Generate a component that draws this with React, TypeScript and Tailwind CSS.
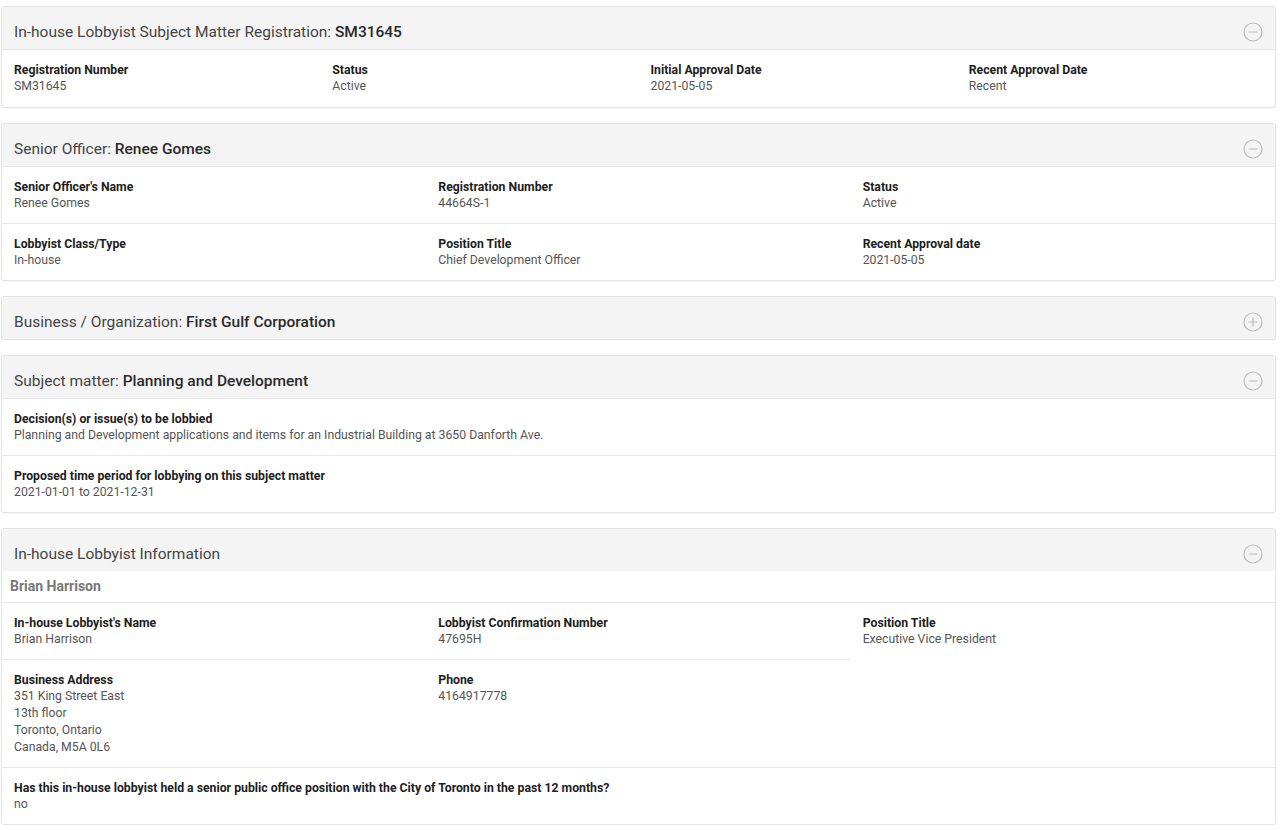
import type { ReactNode } from 'react'

type Field = { label: string; value: ReactNode }

function ToggleIcon({ open }: { open: boolean }) {
  return (
    <svg width="20" height="20" viewBox="0 0 20 20" fill="none" stroke="#bdbdbd" strokeWidth="1.2">
      <circle cx="10" cy="10" r="9" />
      <path d="M5.5 10h9" />
      {!open && <path d="M10 5.5v9" />}
    </svg>
  )
}

function PanelHeader({ title, strong, open, divided }: { title: string; strong?: string; open: boolean; divided: boolean }) {
  return (
    <header
      className={`flex h-[42px] items-start justify-between bg-[#f4f4f4] pl-[12px] pr-[12px] pt-[16px] ${
        divided ? 'h-[43px] border-b border-[#e6e6e6]' : ''
      }`}
    >
      <h2 className="text-[15.5px] leading-[19px] text-[#444]">
        {title}
        {strong && <span className="font-medium text-[#2a2a2a]">{strong}</span>}
      </h2>
      <span className="-mt-[1px]">
        <ToggleIcon open={open} />
      </span>
    </header>
  )
}

function Panel({
  title,
  strong,
  open = true,
  children,
}: {
  title: string
  strong?: string
  open?: boolean
  children?: ReactNode
}) {
  return (
    <section className="overflow-hidden rounded-[3px] border border-[#e3e3e3] bg-white shadow-[0_1px_1px_rgba(0,0,0,0.03)]">
      <PanelHeader title={title} strong={strong} open={open} divided={open && !!children} />
      {open && children}
    </section>
  )
}

function Cell({ label, value, className = '' }: Field & { className?: string }) {
  return (
    <div className={`px-[12px] pt-[12px] pb-[11px] ${className}`}>
      <div className="text-[12.25px] font-bold leading-[16px] text-[#1d1d1d]">{label}</div>
      <div className="text-[12.25px] leading-[17px] text-[#555]">{value}</div>
    </div>
  )
}

function Row({ fields, cols, cellClass }: { fields: Field[]; cols: string; cellClass?: string }) {
  return (
    <div className={`grid ${cols} border-b border-[#e8e8e8] last:border-b-0`}>
      {fields.map((f) => (
        <Cell key={f.label} {...f} className={cellClass} />
      ))}
    </div>
  )
}

export default function App() {
  return (
    <div className="flex min-h-[830px] flex-col gap-[15px] bg-white pt-[6px] pr-[4px] pl-[1px] font-['Roboto',sans-serif]">
      <Panel title="In-house Lobbyist Subject Matter Registration: " strong="SM31645">
        <Row
          cols="grid-cols-4"
          cellClass="!pb-[12px]"
          fields={[
            { label: 'Registration Number', value: 'SM31645' },
            { label: 'Status', value: 'Active' },
            { label: 'Initial Approval Date', value: '2021-05-05' },
            { label: 'Recent Approval Date', value: 'Recent' },
          ]}
        />
      </Panel>

      <Panel title="Senior Officer: " strong="Renee Gomes">
        <Row
          cols="grid-cols-3"
          fields={[
            { label: "Senior Officer's Name", value: 'Renee Gomes' },
            { label: 'Registration Number', value: '44664S-1' },
            { label: 'Status', value: 'Active' },
          ]}
        />
        <Row
          cols="grid-cols-3"
          fields={[
            { label: 'Lobbyist Class/Type', value: 'In-house' },
            { label: 'Position Title', value: 'Chief Development Officer' },
            { label: 'Recent Approval date', value: '2021-05-05' },
          ]}
        />
      </Panel>

      <Panel title="Business / Organization: " strong="First Gulf Corporation" open={false} />

      <Panel title="Subject matter: " strong="Planning and Development">
        <Row
          cols="grid-cols-1"
          fields={[
            {
              label: 'Decision(s) or issue(s) to be lobbied',
              value: 'Planning and Development applications and items for an Industrial Building at 3650 Danforth Ave.',
            },
          ]}
        />
        <Row
          cols="grid-cols-1"
          fields={[{ label: 'Proposed time period for lobbying on this subject matter', value: '2021-01-01 to 2021-12-31' }]}
        />
      </Panel>

      <section className="overflow-hidden rounded-[3px] border border-[#e3e3e3] bg-white">
        <PanelHeader title="In-house Lobbyist Information" open divided={false} />
        <div className="border-b border-[#e6e6e6] px-[8px] py-[6px] text-[14px] font-bold leading-[19px] text-[#777]">
          Brian Harrison
        </div>
        <div className="grid grid-cols-3">
          <Cell label="In-house Lobbyist's Name" value="Brian Harrison" className="border-b border-[#e8e8e8]" />
          <Cell label="Lobbyist Confirmation Number" value="47695H" className="border-b border-[#e8e8e8]" />
          <Cell label="Position Title" value="Executive Vice President" className="row-span-2" />
          <Cell
            label="Business Address"
            value={
              <>
                351 King Street East
                <br />
                13th floor
                <br />
                Toronto, Ontario
                <br />
                Canada, M5A 0L6
              </>
            }
          />
          <Cell label="Phone" value="4164917778" />
        </div>
        <div className="border-t border-[#e8e8e8]">
          <Cell
            label="Has this in-house lobbyist held a senior public office position with the City of Toronto in the past 12 months?"
            value="no"
          />
        </div>
      </section>
    </div>
  )
}
